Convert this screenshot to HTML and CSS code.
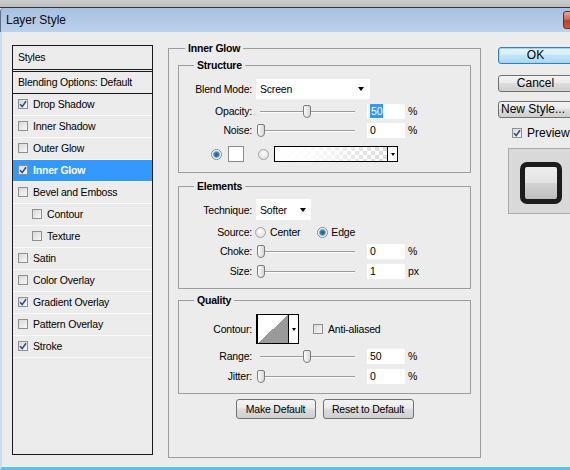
FILE: index.html
```html
<!DOCTYPE html>
<html>
<head>
<meta charset="utf-8">
<title>Layer Style</title>
<link rel="stylesheet" href="styles.css">
</head>
<body>
<div class="window">
  <div class="topstrip"></div>
  <div class="titlebar"><span class="title">Layer Style</span><span class="close"></span></div>
  <div class="dialog">
    <div class="styles-list">
      <div class="head">Styles</div>
      <div class="blend">Blending Options: Default</div>
      <div class="item"><span class="cb"><svg width="8" height="8" viewBox="0 0 8 8"><path d="M1 4.2 L3.2 6.6 L7 1.2" fill="none" stroke="#2b4d8f" stroke-width="1.6"/></svg></span>Drop Shadow</div>
      <div class="item"><span class="cb"></span>Inner Shadow</div>
      <div class="item"><span class="cb"></span>Outer Glow</div>
      <div class="item active"><span class="cb"><svg width="8" height="8" viewBox="0 0 8 8"><path d="M1 4.2 L3.2 6.6 L7 1.2" fill="none" stroke="#2b4d8f" stroke-width="1.6"/></svg></span>Inner Glow</div>
      <div class="item"><span class="cb"></span>Bevel and Emboss</div>
      <div class="item sub"><span class="cb"></span>Contour</div>
      <div class="item sub"><span class="cb"></span>Texture</div>
      <div class="item"><span class="cb"></span>Satin</div>
      <div class="item"><span class="cb"></span>Color Overlay</div>
      <div class="item"><span class="cb"><svg width="8" height="8" viewBox="0 0 8 8"><path d="M1 4.2 L3.2 6.6 L7 1.2" fill="none" stroke="#2b4d8f" stroke-width="1.6"/></svg></span>Gradient Overlay</div>
      <div class="item"><span class="cb"></span>Pattern Overlay</div>
      <div class="item"><span class="cb"><svg width="8" height="8" viewBox="0 0 8 8"><path d="M1 4.2 L3.2 6.6 L7 1.2" fill="none" stroke="#2b4d8f" stroke-width="1.6"/></svg></span>Stroke</div>
    </div>

    <fieldset class="main">
      <legend>Inner Glow</legend>

      <fieldset class="group structure">
        <legend>Structure</legend>
        <div class="row row-select">
          <span class="lbl">Blend Mode:</span>
          <div class="select blendsel">Screen<span class="arrow"></span></div>
        </div>
        <div class="row r-opacity">
          <span class="lbl">Opacity:</span>
          <div class="slider"><span class="thumb" style="left:46px"></span></div>
          <div class="num"><span class="sel">50</span></div>
          <span class="unit">%</span>
        </div>
        <div class="row r-noise">
          <span class="lbl">Noise:</span>
          <div class="slider"><span class="thumb" style="left:0px"></span></div>
          <div class="num">0</div>
          <span class="unit">%</span>
        </div>
        <div class="row colorrow">
          <span class="radio on"></span>
          <span class="swatch"></span>
          <span class="radio r2"></span>
          <div class="gradbox"><span class="gradfill"></span><span class="minidrop"><span class="tri"></span></span></div>
        </div>
      </fieldset>

      <fieldset class="group elements">
        <legend>Elements</legend>
        <div class="row row-tech">
          <span class="lbl">Technique:</span>
          <div class="select techsel">Softer<span class="arrow"></span></div>
        </div>
        <div class="row r-source">
          <span class="lbl">Source:</span>
          <span class="radio first"></span><span class="rtext">Center</span>
          <span class="radio on second"></span><span class="rtext">Edge</span>
        </div>
        <div class="row r-choke">
          <span class="lbl">Choke:</span>
          <div class="slider"><span class="thumb" style="left:0px"></span></div>
          <div class="num">0</div>
          <span class="unit">%</span>
        </div>
        <div class="row r-size">
          <span class="lbl">Size:</span>
          <div class="slider"><span class="thumb" style="left:0px"></span></div>
          <div class="num">1</div>
          <span class="unit">px</span>
        </div>
      </fieldset>

      <fieldset class="group quality">
        <legend>Quality</legend>
        <div class="row row-contour">
          <span class="lbl">Contour:</span>
          <div class="contour"><span class="cshape"></span><span class="minidrop"><span class="tri"></span></span></div>
          <span class="cb aa"></span><span class="aatext">Anti-aliased</span>
        </div>
        <div class="row r-range">
          <span class="lbl">Range:</span>
          <div class="slider"><span class="thumb" style="left:46px"></span></div>
          <div class="num">50</div>
          <span class="unit">%</span>
        </div>
        <div class="row r-jitter">
          <span class="lbl">Jitter:</span>
          <div class="slider"><span class="thumb" style="left:0px"></span></div>
          <div class="num">0</div>
          <span class="unit">%</span>
        </div>
      </fieldset>

      <div class="btnrow">
        <button class="btn b-make">Make Default</button>
        <button class="btn b-reset">Reset to Default</button>
      </div>
    </fieldset>

    <div class="side">
      <button class="sbtn ok">OK</button>
      <button class="sbtn cancel">Cancel</button>
      <button class="sbtn newstyle">New Style...</button>
      <div class="pvrow"><span class="cb"><svg width="8" height="8" viewBox="0 0 8 8"><path d="M1 4.2 L3.2 6.6 L7 1.2" fill="none" stroke="#2b4d8f" stroke-width="1.6"/></svg></span><span class="pvtext">Preview</span></div>
      <div class="preview"><div class="pvsquare"></div></div>
    </div>
  </div>
</div>
</body>
</html>
```

FILE: styles.css
```css
* { box-sizing: border-box; }
html, body { margin: 0; padding: 0; }
body {
  width: 570px;
  height: 470px;
  overflow: hidden;
  background: #ececec;
  font-family: "Liberation Sans", Arial, sans-serif;
  font-size: 10.5px;
  letter-spacing: -0.2px;
  color: #000;
}
.window {
  width: 570px;
  height: 470px;
  display: flex;
  flex-direction: column;
  overflow: hidden;
}
.topstrip {
  height: 8px;
  flex-shrink: 0;
  background: linear-gradient(#cdcdcd, #bcbcbc);
  border-bottom: 1px solid #2d3642;
}
.titlebar {
  height: 24px;
  flex-shrink: 0;
  display: flex;
  align-items: center;
  padding-left: 5px;
  border-left: 1px solid #5d6f86;
  border-top-left-radius: 4px;
  background: linear-gradient(#a7c1e2, #bcd1eb);
}
.title {
  font-size: 12px;
  letter-spacing: 0;
  color: #0b0b0b;
}
.close {
  margin-left: auto;
  margin-right: -30px;
  width: 37px;
  height: 18px;
  flex-shrink: 0;
  border: 1px solid #6e2a1c;
  border-radius: 3px;
  background: linear-gradient(#e9a593, #d06a50 45%, #c13d22 55%, #d0583a);
}
.dialog {
  flex: 1;
  display: flex;
  align-items: flex-start;
  padding: 9px 0 0 10px;
  border-left: 2px solid #cddcee;
  border-bottom: 3px solid #58c5e6;
  background: #ececec;
  overflow: hidden;
}

/* left list */
.styles-list {
  flex-shrink: 0;
  width: 141px;
  height: 410px;
  margin-top: 4px;
  border: 1px solid #1a1a1a;
}
.head {
  height: 24px;
  line-height: 23px;
  padding-left: 5px;
  border-bottom: 1px solid #1a1a1a;
}
.blend {
  height: 23px;
  line-height: 20px;
  margin-top: 1px;
  padding-left: 5px;
  border-top: 1px solid #1a1a1a;
  border-bottom: 1px solid #1a1a1a;
}
.item {
  height: 22px;
  display: flex;
  align-items: center;
  padding-left: 5px;
  padding-bottom: 2px;
  border-bottom: 1px solid #f8f8f8;
}
.item.sub { padding-left: 19px; }
.item.active {
  background: #3399ff;
  color: #fff;
  font-weight: bold;
}
.cb {
  width: 10px;
  height: 10px;
  flex-shrink: 0;
  margin-right: 5px;
  border: 1px solid #8e8f8f;
  background: linear-gradient(135deg, #d8d8d8, #f8f8f8);
  display: flex;
  align-items: center;
  justify-content: center;
}
.cb svg { display: block; }

/* main group */
fieldset { margin: 0; min-width: 0; }
legend {
  font-weight: bold;
  line-height: 14px;
  height: 14px;
  padding: 0 3px;
}
.main {
  flex-shrink: 0;
  width: 313px;
  height: 417px;
  margin-left: 15px;
  padding: 3px 9px 0 9px;
  border: 1px solid #9d9d9d;
}
.main > legend { margin-left: 7px; }
.group {
  padding: 7px 0 10px 0;
  border: 1px solid #9d9d9d;
}
.group > legend { margin-left: 15px; }
.elements { margin-top: 6px; padding-top: 6px; padding-bottom: 9px; }
.quality { margin-top: 4px; padding-bottom: 9px; }

.row {
  display: flex;
  align-items: center;
  height: 16px;
}
.lbl {
  width: 73px;
  flex-shrink: 0;
  text-align: right;
  margin-right: 4px;
}
.row-select { height: 20px; }
.r-opacity { margin-top: 4px; }
.r-noise { margin-top: 3px; }
.colorrow { margin-top: 8px; padding-left: 32px; }
.row-tech { height: 21px; }
.r-source { margin-top: 4px; }
.r-choke { margin-top: 3px; }
.r-size { margin-top: 4px; }
.row-contour { height: 30px; }
.r-range { margin-top: 4px; }
.r-jitter { margin-top: 4px; }

.select {
  height: 100%;
  background: #fff;
  display: flex;
  align-items: center;
  padding-left: 4px;
}
.blendsel { width: 114px; }
.techsel { width: 55px; }
.arrow {
  margin-left: auto;
  margin-right: 6px;
  width: 0;
  height: 0;
  border-left: 3.5px solid transparent;
  border-right: 3.5px solid transparent;
  border-top: 4px solid #000;
}
.techsel .arrow { margin-right: 5px; }

.slider {
  position: relative;
  width: 100px;
  height: 16px;
  margin-left: 1px;
  flex-shrink: 0;
  background:
    linear-gradient(#9c9c9c, #9c9c9c) 3px 8px / 95px 1px no-repeat,
    linear-gradient(#fdfdfd, #fdfdfd) 3px 9px / 95px 1px no-repeat;
}
.thumb {
  position: absolute;
  top: 2px;
  width: 8px;
  height: 13px;
  border: 1px solid #7c7c7c;
  border-radius: 2px 2px 4px 4px;
  background: linear-gradient(to right, #fdfdfd, #d6d6d6);
}
.num {
  width: 38px;
  height: 15px;
  line-height: 15px;
  margin-left: 10px;
  padding-left: 3px;
  background: #fff;
  flex-shrink: 0;
}
.sel {
  background: #3399ff;
  color: #fff;
  padding: 1px 1px;
}
.unit { margin-left: 3px; }

.radio {
  width: 11px;
  height: 11px;
  flex-shrink: 0;
  border-radius: 50%;
  border: 1px solid #a5a5a5;
  background: radial-gradient(circle at 50% 40%, #ffffff, #d6d6d6);
}
.radio.on {
  border-color: #7f8c98;
  background: radial-gradient(circle, #1d5584 0, #3b8ac3 2.4px, #8fc6ea 3.3px, #ffffff 3.9px, #e2e2e2 100%);
}
.swatch {
  width: 16px;
  height: 16px;
  margin-left: 6px;
  border: 1px solid #8a8a8a;
  background: #fff;
}
.colorrow .r2 { margin-left: 14px; }
.gradbox {
  width: 124px;
  height: 16px;
  margin-left: 5px;
  border: 1px solid #000;
  display: flex;
}
.gradfill {
  flex: 1;
  background:
    linear-gradient(to right, #ffffff 0%, rgba(255,255,255,0.9) 30%, rgba(255,255,255,0.25) 100%),
    conic-gradient(#cfcfcf 25%, #ffffff 0 50%, #cfcfcf 0 75%, #ffffff 0) 0 0 / 8px 8px;
}
.minidrop {
  width: 10px;
  flex-shrink: 0;
  border-left: 1px solid #000;
  background: #fff;
  display: flex;
  align-items: center;
  justify-content: center;
}
.tri {
  width: 0;
  height: 0;
  border-left: 2.5px solid transparent;
  border-right: 2.5px solid transparent;
  border-top: 3px solid #000;
}

.r-source .first { margin-left: -1px; }
.rtext { margin-left: 4px; }
.r-source .second { margin-left: 17px; }
.r-source .second + .rtext { margin-left: 3px; }

.contour {
  width: 43px;
  height: 30px;
  border: 1px solid #000;
  border-left-width: 2px;
  display: flex;
}
.cshape {
  flex: 1;
  background: linear-gradient(to bottom right, #ffffff 50%, #9a9a9a 50%);
}
.cb.aa { margin-left: 14px; margin-right: 5px; }

.btnrow {
  display: flex;
  justify-content: center;
  gap: 7px;
  margin-top: 5px;
}
.btn, .sbtn {
  font-family: inherit;
  letter-spacing: inherit;
  color: #000;
  padding: 0;
  border: 1px solid #707070;
  border-radius: 3px;
  background: linear-gradient(#f3f3f3, #ebebeb 45%, #dddddd 50%, #cfcfcf);
}
.btn {
  height: 20px;
  font-size: 10.5px;
}
.b-make { width: 80px; }
.b-reset { width: 91px; }

/* right column */
.side {
  flex-shrink: 0;
  width: 80px;
  margin-left: 17px;
  padding-top: 6px;
  display: flex;
  flex-direction: column;
  align-items: flex-start;
}
.sbtn {
  width: 75px;
  height: 17px;
  font-size: 12px;
  letter-spacing: 0;
  line-height: 15px;
}
.ok {
  border-color: #3c7fb1;
  background: linear-gradient(#e6f4fc, #d4edfb 45%, #bfe4f9 50%, #a9d8f3);
  box-shadow: inset 0 0 0 1px #9fd5f2;
}
.cancel { margin-top: 11px; }
.newstyle { margin-top: 9px; text-align: left; padding-left: 2px; }
.pvrow {
  margin-top: 8px;
  margin-left: 14px;
  height: 14px;
  display: flex;
  align-items: center;
  font-size: 12px;
  letter-spacing: 0;
}
.preview {
  margin-top: 8px;
  margin-left: 10px;
  width: 70px;
  height: 66px;
  border: 1px solid #a9a9a9;
  background: #d9d9d9;
  padding: 13px 0 0 11px;
}
.pvsquare {
  width: 42px;
  height: 42px;
  border: 5px solid #1c1c1c;
  border-radius: 7px;
  background: linear-gradient(#eeeeee, #e2e2e2 50%, #d3d3d3 50%, #bdbdbd);
}
```
